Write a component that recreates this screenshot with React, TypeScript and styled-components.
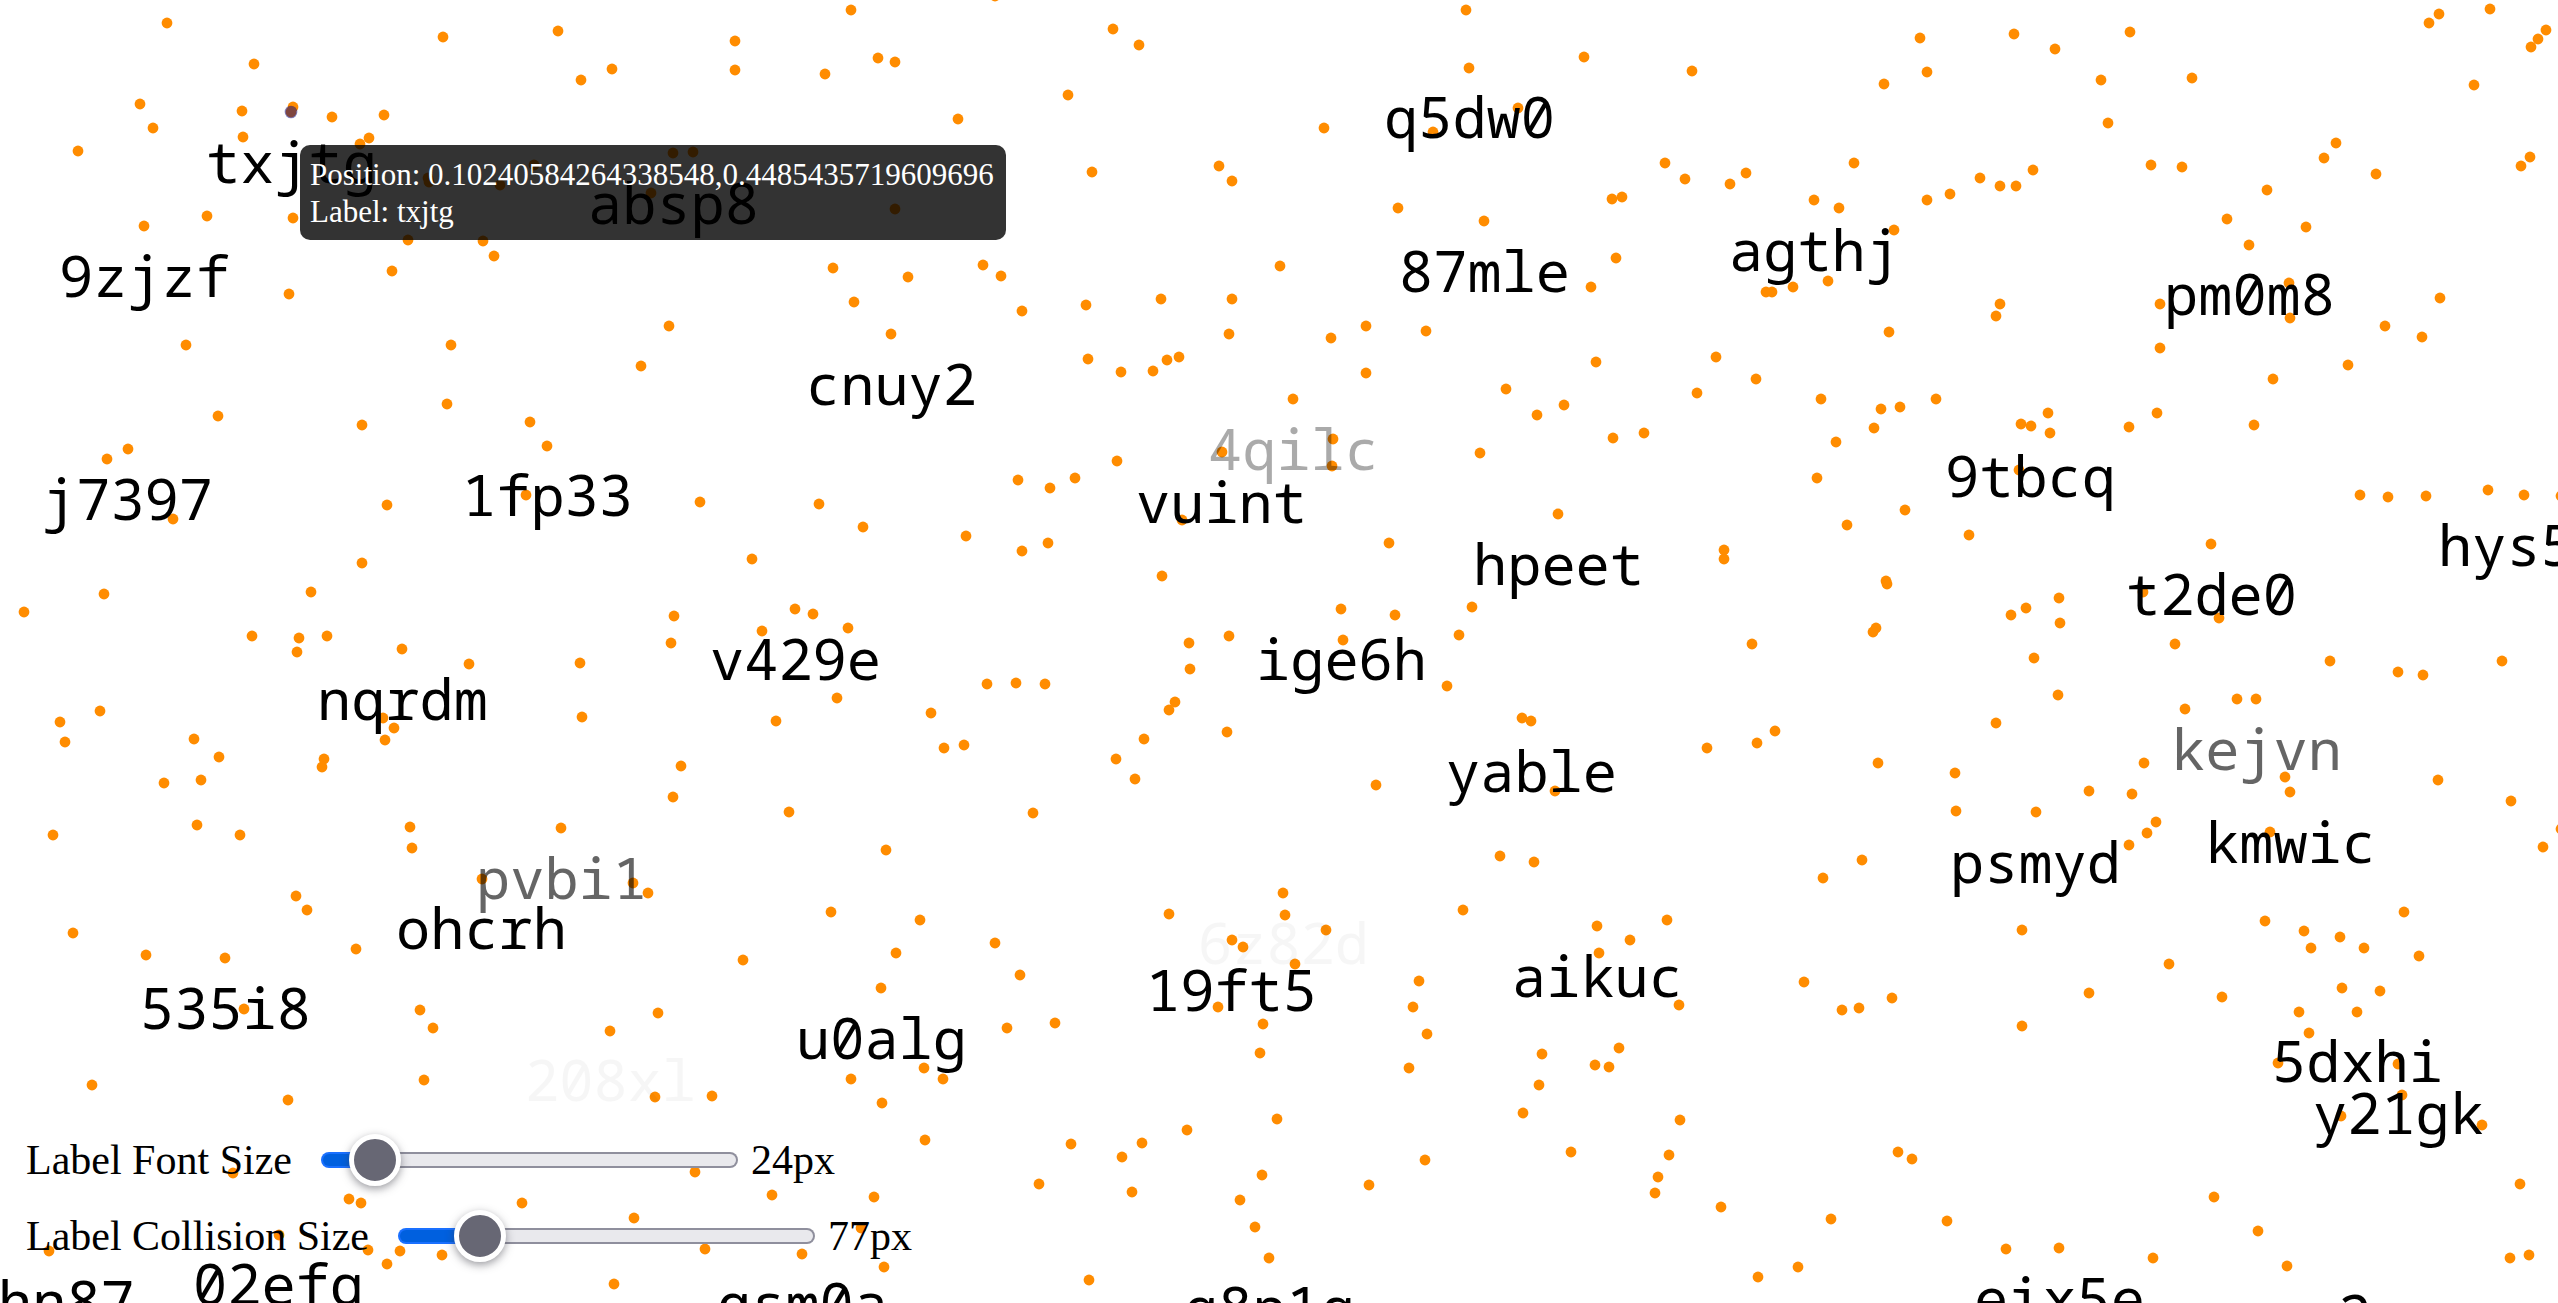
import React, { useState } from "react";
import styled, { createGlobalStyle } from "styled-components";

type Point = [number, number];

interface LabelDatum {
  text: string;
  x: number;
  baseline: number;
  opacity?: number;
}

const POINTS: Point[] = [
  [167, 23], [443, 37], [558, 31], [254, 64], [612, 69], [581, 80], [140, 104], [153, 128],
  [242, 111], [293, 107], [291, 112], [332, 117], [384, 115], [243, 137], [369, 138], [360, 144],
  [78, 151], [534, 165], [428, 178], [429, 182], [500, 185], [207, 216], [144, 226], [293, 218],
  [408, 240], [483, 241], [494, 256], [392, 271], [289, 294], [186, 345], [451, 345], [641, 366],
  [447, 404], [218, 416], [362, 425], [530, 422],
  [851, 10], [995, -4], [1113, 29], [1139, 45], [735, 41], [735, 70], [825, 74], [878, 58],
  [895, 62], [1068, 95], [958, 119], [673, 153], [693, 152], [1092, 172], [1219, 166], [1232, 181],
  [651, 193], [895, 209], [833, 268], [908, 277], [983, 265], [1001, 276], [854, 302], [1022, 311],
  [1086, 305], [1161, 299], [1232, 299], [1280, 266], [669, 326], [891, 334], [1229, 334],
  [1088, 359], [1121, 372], [1153, 371], [1167, 360], [1179, 357],
  [1466, 10], [1920, 38], [1584, 57], [1469, 68], [1692, 71], [1884, 84], [1518, 108], [1324, 128],
  [1433, 132], [1665, 163], [1854, 163], [1685, 179], [1746, 173], [1730, 184], [1612, 199],
  [1622, 197], [1814, 200], [1398, 208], [1839, 208], [1484, 221], [1894, 230], [1616, 258],
  [1591, 287], [1828, 281], [1793, 287], [1766, 292], [1772, 292], [1366, 326], [1426, 331],
  [1331, 338], [1889, 332], [1366, 373], [1596, 362], [1716, 357], [1756, 379], [1697, 393],
  [1506, 389], [1293, 399], [1564, 405], [1537, 415], [1821, 399], [1881, 409], [1900, 407],
  [1874, 428], [1644, 433], [1613, 438], [1333, 439],
  [2014, 34], [2055, 49], [2130, 32], [1927, 72], [2101, 80], [2192, 78], [2429, 23], [2439, 14],
  [2490, 9], [2546, 30], [2538, 39], [2531, 47], [2474, 85], [2108, 123], [2336, 143], [2324, 158],
  [2151, 165], [2182, 167], [2530, 157], [2521, 166], [2033, 170], [1980, 178], [2000, 186],
  [2016, 186], [1950, 194], [2376, 174], [2267, 190], [2227, 219], [2306, 227], [2249, 245],
  [1927, 200], [2289, 283], [2290, 318], [2000, 304], [1996, 316], [2160, 304], [2160, 348],
  [2440, 298], [2385, 326], [2422, 337], [2348, 365], [2273, 379], [1936, 399], [2048, 413],
  [2021, 424], [2031, 426], [2050, 433], [2157, 413], [2129, 427], [2254, 425],
  [128, 449], [107, 459], [547, 446], [526, 495], [387, 505], [173, 519], [362, 563], [311, 592],
  [104, 594], [24, 612], [252, 636], [327, 636], [299, 638], [297, 652], [402, 649], [469, 664],
  [580, 663], [100, 711], [60, 722], [65, 742], [194, 739], [219, 757], [201, 780], [164, 783],
  [383, 718], [394, 728], [385, 740], [582, 717], [324, 759], [322, 767], [53, 835], [197, 825],
  [240, 835], [410, 827], [412, 848], [561, 828],
  [700, 502], [819, 504], [863, 527], [752, 559], [674, 616], [671, 643], [795, 609], [813, 614],
  [762, 631], [848, 628], [837, 698], [776, 721], [931, 713], [944, 748], [964, 745], [987, 684],
  [1016, 683], [1045, 684], [681, 766], [673, 797], [789, 812], [1033, 813], [886, 850],
  [1018, 480], [1050, 488], [1075, 478], [1117, 461], [1222, 452], [1182, 520], [966, 536],
  [1022, 551], [1048, 543], [1162, 576], [1229, 636], [1189, 643], [1190, 669], [1175, 702],
  [1169, 710], [1144, 739], [1227, 732], [1116, 759], [1135, 779],
  [1332, 466], [1480, 453], [1836, 442], [1817, 478], [1905, 510], [1847, 525], [1558, 514],
  [1389, 543], [1724, 550], [1724, 559], [1886, 581], [1887, 584], [1876, 628], [1873, 632],
  [1472, 607], [1341, 609], [1395, 615], [1459, 635], [1343, 640], [1752, 644], [1447, 686],
  [1522, 718], [1531, 721], [1775, 731], [1757, 743], [1707, 748], [1878, 763], [1376, 785],
  [1555, 791], [1500, 856], [1534, 862], [1862, 860],
  [2019, 470], [2360, 495], [2388, 497], [2426, 496], [2488, 490], [2524, 495], [2561, 496],
  [1969, 535], [2211, 544], [2143, 592], [2219, 618], [2059, 598], [2026, 608], [2011, 615],
  [2060, 623], [2175, 644], [2034, 658], [2058, 695], [2330, 661], [2398, 672], [2423, 675],
  [2502, 661], [2237, 699], [2256, 699], [2185, 709], [1996, 723], [2144, 763], [1955, 773],
  [1956, 811], [2036, 812], [2089, 791], [2132, 794], [2285, 777], [2290, 792], [2438, 780],
  [2511, 801], [2156, 822], [2147, 833], [2129, 845], [2270, 832], [2543, 847], [2561, 829],
  [482, 879], [633, 883], [296, 896], [307, 910], [73, 933], [146, 955], [225, 958], [356, 949],
  [244, 1009], [420, 1010], [433, 1028], [610, 1031], [424, 1080], [92, 1085], [288, 1100],
  [233, 1173], [349, 1199], [361, 1203], [522, 1203], [634, 1218], [279, 1235], [49, 1251],
  [368, 1250], [400, 1251], [387, 1264], [442, 1255], [614, 1284],
  [648, 893], [831, 912], [920, 920], [995, 943], [896, 953], [743, 960], [1020, 975], [881, 988],
  [658, 1013], [1007, 1028], [1055, 1023], [924, 1068], [943, 1079], [851, 1079], [655, 1097],
  [712, 1096], [882, 1103], [925, 1140], [695, 1172], [772, 1195], [874, 1197], [861, 1228],
  [705, 1249], [802, 1254], [884, 1267], [1169, 914], [1232, 940], [1243, 947], [1218, 1007],
  [1263, 1024], [1260, 1053], [1277, 1119], [1187, 1130], [1071, 1144], [1142, 1143], [1122, 1157],
  [1039, 1184], [1132, 1192], [1262, 1175], [1240, 1200], [1255, 1227], [1269, 1258], [1089, 1280],
  [1283, 893], [1285, 915], [1326, 930], [1463, 910], [1295, 964], [1823, 878], [1597, 926],
  [1667, 920], [1630, 940], [1599, 953], [1419, 981], [1413, 1007], [1679, 1005], [1427, 1034],
  [1804, 982], [1842, 1010], [1859, 1008], [1892, 998], [1619, 1048], [1542, 1054], [1595, 1065],
  [1609, 1067], [1409, 1068], [1539, 1085], [1523, 1113], [1680, 1120], [1571, 1152], [1669, 1155],
  [1425, 1160], [1898, 1152], [1912, 1159], [1658, 1177], [1655, 1193], [1369, 1185], [1721, 1207],
  [1831, 1219], [1798, 1267], [1758, 1277],
  [2022, 930], [2169, 964], [2089, 993], [2222, 997], [2022, 1026], [2265, 921], [2304, 931],
  [2311, 948], [2340, 937], [2364, 948], [2404, 912], [2419, 956], [2342, 988], [2380, 991],
  [2299, 1012], [2357, 1012], [2309, 1033], [2278, 1063], [2398, 1064], [2402, 1095], [2341, 1116],
  [2482, 1125], [2520, 1184], [2214, 1197], [2258, 1231], [1947, 1221], [2006, 1249], [2059, 1248],
  [2153, 1258], [2287, 1266], [2510, 1258], [2529, 1255],
];

const HOVERED: Point = [291, 112];

/* x is the left edge of the first character cell */
const LABELS: LabelDatum[] = [
  { text: "208xl", x: 525, baseline: 1101, opacity: 0.03 },
  { text: "6z82d", x: 1198, baseline: 964, opacity: 0.03 },
  { text: "4qilc", x: 1208, baseline: 470, opacity: 0.33 },
  { text: "kejvn", x: 2171, baseline: 770, opacity: 0.6 },
  { text: "pvbi1", x: 476, baseline: 899, opacity: 0.6 },
  { text: "txjtg", x: 206, baseline: 183 },
  { text: "absp8", x: 588, baseline: 224 },
  { text: "9zjzf", x: 59, baseline: 297 },
  { text: "cnuy2", x: 806, baseline: 405 },
  { text: "q5dw0", x: 1384, baseline: 138 },
  { text: "87mle", x: 1399, baseline: 292 },
  { text: "agthj", x: 1729, baseline: 271 },
  { text: "pm0m8", x: 2164, baseline: 315 },
  { text: "j7397", x: 42, baseline: 520 },
  { text: "1fp33", x: 462, baseline: 516 },
  { text: "nqrdm", x: 317, baseline: 720 },
  { text: "vuint", x: 1136, baseline: 523 },
  { text: "v429e", x: 710, baseline: 680 },
  { text: "ige6h", x: 1256, baseline: 680 },
  { text: "hpeet", x: 1473, baseline: 585 },
  { text: "yable", x: 1446, baseline: 792 },
  { text: "9tbcq", x: 1945, baseline: 497 },
  { text: "t2de0", x: 2126, baseline: 615 },
  { text: "hys5", x: 2438, baseline: 566 },
  { text: "kmwic", x: 2205, baseline: 863 },
  { text: "psmyd", x: 1950, baseline: 883 },
  { text: "ohcrh", x: 396, baseline: 949 },
  { text: "535i8", x: 140, baseline: 1029 },
  { text: "u0alg", x: 796, baseline: 1059 },
  { text: "19ft5", x: 1146, baseline: 1011 },
  { text: "aikuc", x: 1512, baseline: 997 },
  { text: "5dxhi", x: 2272, baseline: 1082 },
  { text: "y21gk", x: 2313, baseline: 1134 },
  { text: "hn87", x: -2, baseline: 1322 },
  { text: "02efg", x: 193, baseline: 1305 },
  { text: "qsm0a", x: 717, baseline: 1324 },
  { text: "q8p1g", x: 1184, baseline: 1328 },
  { text: "eix5e", x: 1974, baseline: 1319 },
  { text: "2", x: 2338, baseline: 1336 },
];

const LABEL_ASCENT = 55;

const GlobalStyle = createGlobalStyle`
  body {
    margin: 0;
    background: #fff;
    color: #000;
    font-family: "Liberation Serif", "Times New Roman", serif;
  }
`;

const Stage = styled.main`
  position: relative;
  height: 100vh;
  overflow: hidden;
`;

const Plot = styled.svg`
  display: block;
  width: 100%;
  height: 100%;
`;

const Dot = styled.circle`
  fill: #ff8c00;
`;

const HoverDot = styled.circle`
  fill: rgba(0, 0, 128, 0.5);
`;

const PointLabel = styled.span`
  position: absolute;
  font-family: "Noto Sans Mono", "DejaVu Sans Mono", monospace;
  font-size: 57px;
  line-height: 66px;
  white-space: nowrap;
  pointer-events: none;
`;

const Tooltip = styled.div`
  position: absolute;
  left: 300px;
  top: 145px;
  padding: 11px 12px 10px 10px;
  border-radius: 10px;
  background: rgba(0, 0, 0, 0.8);
  color: #fff;
  font-size: 31px;
  line-height: 37px;
  white-space: nowrap;
`;

const Controls = styled.form`
  position: absolute;
  left: 26px;
  bottom: 29px;
  display: flex;
  flex-direction: column;
`;

const ControlRow = styled.div`
  display: flex;
  align-items: center;
  height: 76px;
  font-size: 42px;
  line-height: 48px;
  white-space: nowrap;
`;

const ControlLabel = styled.label`
  margin-right: 29px;
`;

const ControlValue = styled.output`
  margin-left: 13px;
`;

const Slider = styled.input`
  appearance: none;
  width: 417px;
  height: 52px;
  margin: 0;
  background: transparent;

  &::-webkit-slider-runnable-track {
    box-sizing: border-box;
    height: 16px;
    border: 2px solid transparent;
    border-radius: 8px;
    background:
      linear-gradient(to right, #0060df var(--fill), #e9e9ed var(--fill)) padding-box,
      linear-gradient(to right, #1a70ff var(--fill), #8f8f9d var(--fill)) border-box;
  }

  &::-webkit-slider-thumb {
    appearance: none;
    box-sizing: border-box;
    width: 52px;
    height: 52px;
    margin-top: -20px;
    border: 5px solid #fff;
    border-radius: 50%;
    background: #676774;
    box-shadow: 0 3px 8px rgba(58, 57, 68, 0.5);
  }
`;

interface RangeControlProps {
  id: string;
  label: string;
  min: number;
  max: number;
  initial: number;
}

function RangeControl({ id, label, min, max, initial }: RangeControlProps) {
  const [value, setValue] = useState(initial);
  const fill = { "--fill": `${Math.round(((value - min) / (max - min)) * 88 + 6)}%` };
  return (
    <ControlRow>
      <ControlLabel htmlFor={id}>{label}</ControlLabel>
      <Slider
        id={id}
        type="range"
        min={min}
        max={max}
        value={value}
        style={fill as React.CSSProperties}
        onChange={(event) => setValue(Number(event.target.value))}
      />
      <ControlValue htmlFor={id}>{value}px</ControlValue>
    </ControlRow>
  );
}

export default function App() {
  return (
    <>
      <GlobalStyle />
      <Stage>
        <Plot aria-hidden="true">
          {POINTS.map(([x, y]) => (
            <Dot key={`${x}-${y}`} cx={x} cy={y} r={5.4} />
          ))}
          <HoverDot cx={HOVERED[0]} cy={HOVERED[1]} r={6.3} />
        </Plot>
        {LABELS.map(({ text, x, baseline, opacity = 1 }) => (
          <PointLabel key={text} style={{ left: x, top: baseline - LABEL_ASCENT, opacity }}>
            {text}
          </PointLabel>
        ))}
        <Controls>
          <RangeControl id="font-size" label="Label Font Size" min={2} max={304} initial={24} />
          <RangeControl id="collision-size" label="Label Collision Size" min={2} max={504} initial={77} />
        </Controls>
        <Tooltip role="tooltip">
          <div>Position: 0.10240584264338548,0.4485435719609696</div>
          <div>Label: txjtg</div>
        </Tooltip>
      </Stage>
    </>
  );
}
